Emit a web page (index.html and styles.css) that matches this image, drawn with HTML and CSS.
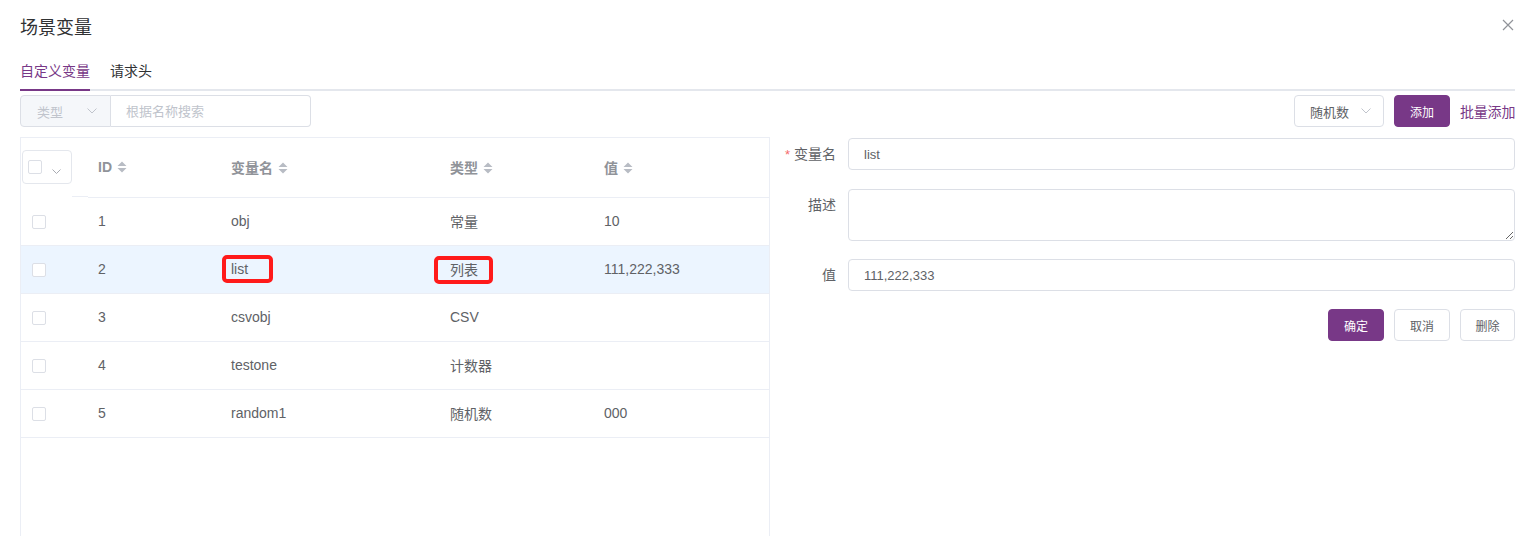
FILE: index.html
```html
<!DOCTYPE html>
<html lang="zh">
<head>
<meta charset="utf-8">
<title>场景变量</title>
<link rel="stylesheet" href="styles.css">
</head>
<body>
<div class="dialog">
  <div class="dlg-head">
    <span class="title">场景变量</span>
    <svg class="close" width="12" height="12" viewBox="0 0 12 12"><path d="M1 1L11 11M11 1L1 11" stroke="#909399" stroke-width="1.2" fill="none"/></svg>
  </div>
  <div class="tabs">
    <div class="tab active">自定义变量</div>
    <div class="tab">请求头</div>
  </div>
  <div class="toolbar">
    <div class="search">
      <div class="type-select">
        <span>类型</span>
        <svg width="10" height="6" viewBox="0 0 10 6"><path d="M0.5 0.5L5 5L9.5 0.5" stroke="#c0c4cc" fill="none"/></svg>
      </div>
      <input class="search-input" placeholder="根据名称搜索">
    </div>
    <div class="actions">
      <div class="sel">
        <span>随机数</span>
        <svg width="10" height="6" viewBox="0 0 10 6"><path d="M0.5 0.5L5 5L9.5 0.5" stroke="#c0c4cc" fill="none"/></svg>
      </div>
      <button class="btn primary">添加</button>
      <span class="link">批量添加</span>
    </div>
  </div>
  <div class="main">
    <div class="table-wrap">
      <table class="vtable">
        <colgroup>
          <col style="width:67px"><col style="width:133px"><col style="width:219px"><col style="width:154px"><col style="width:175px">
        </colgroup>
        <thead>
          <tr>
            <th class="selcol"><div class="allbox"><span class="cb"></span><svg width="9" height="5" viewBox="0 0 9 5"><path d="M0.5 0.5L4.5 4.5L8.5 0.5" stroke="#a8abb2" fill="none"/></svg></div></th>
            <th>ID<svg class="caret" width="10" height="12" viewBox="0 0 10 12"><path d="M0.5 5L5 0.5L9.5 5Z M0.5 7L5 11.5L9.5 7Z" fill="#b8bcc4"/></svg></th>
            <th>变量名<svg class="caret" width="10" height="12" viewBox="0 0 10 12"><path d="M0.5 5L5 0.5L9.5 5Z M0.5 7L5 11.5L9.5 7Z" fill="#b8bcc4"/></svg></th>
            <th>类型<svg class="caret" width="10" height="12" viewBox="0 0 10 12"><path d="M0.5 5L5 0.5L9.5 5Z M0.5 7L5 11.5L9.5 7Z" fill="#b8bcc4"/></svg></th>
            <th>值<svg class="caret" width="10" height="12" viewBox="0 0 10 12"><path d="M0.5 5L5 0.5L9.5 5Z M0.5 7L5 11.5L9.5 7Z" fill="#b8bcc4"/></svg></th>
          </tr>
        </thead>
        <tbody>
          <tr><td class="cbcell"><span class="cb"></span></td><td>1</td><td>obj</td><td>常量</td><td>10</td></tr>
          <tr class="current"><td class="cbcell"><span class="cb"></span></td><td>2</td><td><span class="mark mark-name">list</span></td><td><span class="mark mark-type">列表</span></td><td>111,222,333</td></tr>
          <tr><td class="cbcell"><span class="cb"></span></td><td>3</td><td>csvobj</td><td>CSV</td><td></td></tr>
          <tr><td class="cbcell"><span class="cb"></span></td><td>4</td><td>testone</td><td>计数器</td><td></td></tr>
          <tr><td class="cbcell"><span class="cb"></span></td><td>5</td><td>random1</td><td>随机数</td><td>000</td></tr>
        </tbody>
      </table>
    </div>
    <div class="form">
      <div class="form-item">
        <label class="label"><span class="req">*</span>变量名</label>
        <input class="field" value="list">
      </div>
      <div class="form-item">
        <label class="label">描述</label>
        <textarea class="field area"></textarea>
      </div>
      <div class="form-item">
        <label class="label">值</label>
        <input class="field" value="111,222,333">
      </div>
      <div class="form-btns">
        <button class="btn primary">确定</button>
        <button class="btn plain">取消</button>
        <button class="btn plain">删除</button>
      </div>
    </div>
  </div>
</div>
</body>
</html>
```
FILE: styles.css
```css
* { box-sizing: border-box; }
body {
  margin: 0;
  background: #fff;
  font-family: "Liberation Sans", "Noto Sans CJK SC", sans-serif;
  color: #606266;
  overflow: hidden;
}
.dialog { padding: 0 20px; }
.dlg-head {
  height: 50px;
  padding-top: 16px;
  display: flex;
  justify-content: space-between;
  align-items: flex-start;
}
.title { font-size: 18px; line-height: 24px; color: #303133; }
.close { margin-top: 3px; margin-right: 1px; }

.tabs {
  display: flex;
  height: 41px;
  border-bottom: 2px solid #e4e7ed;
}
.tab {
  font-size: 14px;
  padding: 3px 20px 0;
  line-height: 36px;
  color: #303133;
}
.tab:first-child { padding-left: 0; }
.tab.active {
  color: #783887;
  border-bottom: 2px solid #783887;
  height: 41px;
  padding-right: 0;
}

.toolbar {
  margin-top: 4px;
  display: flex;
  justify-content: space-between;
  height: 32px;
}
.search { display: flex; }
.type-select {
  width: 91px;
  height: 32px;
  background: #f5f7fa;
  border: 1px solid #dcdfe6;
  border-radius: 4px 0 0 4px;
  display: flex;
  align-items: center;
  justify-content: space-between;
  padding: 0 13px 0 16px;
  font-size: 13px;
  color: #c0c4cc;
}
.search-input {
  width: 200px;
  height: 32px;
  border: 1px solid #dcdfe6;
  border-left: none;
  border-radius: 0 4px 4px 0;
  padding: 0 15px;
  font-family: inherit;
  font-size: 13px;
  outline: none;
}
.search-input::placeholder { color: #c0c4cc; }
.actions { display: flex; align-items: center; gap: 10px; }
.sel {
  width: 90px;
  height: 32px;
  border: 1px solid #dcdfe6;
  border-radius: 4px;
  display: flex;
  align-items: center;
  justify-content: space-between;
  padding: 0 12px 0 15px;
  font-size: 13px;
  color: #606266;
}
.btn {
  height: 32px;
  width: 56px;
  border-radius: 4px;
  font-family: inherit;
  font-size: 12px;
  padding: 0;
  cursor: pointer;
}
.btn.primary { background: #783887; border: 1px solid #783887; color: #fff; }
.btn.plain { background: #fff; border: 1px solid #dcdfe6; color: #606266; }
.link { color: #783887; font-size: 14px; width: 55px; white-space: nowrap; letter-spacing: -0.2px; }

.main { display: flex; margin-top: 10px; }
.table-wrap {
  width: 750px;
  height: 420px;
  border: 1px solid #ebeef5;
  border-bottom: none;
  flex: none;
}
.vtable {
  width: 748px;
  table-layout: fixed;
  border-collapse: collapse;
  font-size: 14px;
}
.vtable th {
  height: 59px;
  text-align: left;
  font-weight: bold;
  color: #909399;
  padding: 0 10px;
  border-bottom: 1px solid #ebeef5;
  vertical-align: middle;
}
.vtable th.selcol {
  padding: 0 0 0 1px;
  border-bottom: none;
  background: linear-gradient(#ebeef5, #ebeef5) no-repeat right bottom / 16px 1px;
}
.allbox {
  width: 50px;
  height: 34px;
  border: 1px solid #e4e7ed;
  border-radius: 4px;
  display: flex;
  align-items: center;
  padding-left: 5px;
  margin-top: -1px;
}
.allbox svg { margin-left: 10px; margin-top: 9px; }
.caret { margin-left: 5px; vertical-align: -1px; }
.vtable td {
  height: 48px;
  padding: 0 10px;
  border-bottom: 1px solid #ebeef5;
  color: #606266;
  vertical-align: middle;
}
.vtable td.cbcell { padding-left: 11px; }
.cb {
  display: inline-block;
  width: 14px;
  height: 14px;
  border: 1px solid #dcdfe6;
  border-radius: 2px;
  background: #fff;
  vertical-align: middle;
}
.vtable tr.current td { background: #ecf5ff; }
.mark {
  border: 4px solid #ff1a1a;
  border-radius: 5px;
  padding: 2px 0;
}
.mark-name { margin-left: -9px; padding-left: 5px; padding-right: 21px; }
.mark-type { margin-left: -16px; padding-left: 12px; padding-right: 11px; }

.form { flex: 1; padding-top: 1px; }
.form-item { display: flex; margin-bottom: 18px; }
.label {
  width: 78px;
  flex: none;
  text-align: right;
  padding-right: 12px;
  font-size: 14px;
  line-height: 32px;
  color: #606266;
}
.req { color: #f56c6c; margin-right: 4px; font-size: 13px; }
.field {
  flex: 1;
  height: 32px;
  border: 1px solid #dcdfe6;
  border-radius: 4px;
  padding: 0 15px;
  font-family: inherit;
  font-size: 13px;
  color: #606266;
  outline: none;
  background: #fff;
}
.field.area { height: 52px; padding: 5px 15px; resize: vertical; }
.form-btns { display: flex; justify-content: flex-end; gap: 10px; }
.form-btns .btn:last-child { width: 55px; }
```
